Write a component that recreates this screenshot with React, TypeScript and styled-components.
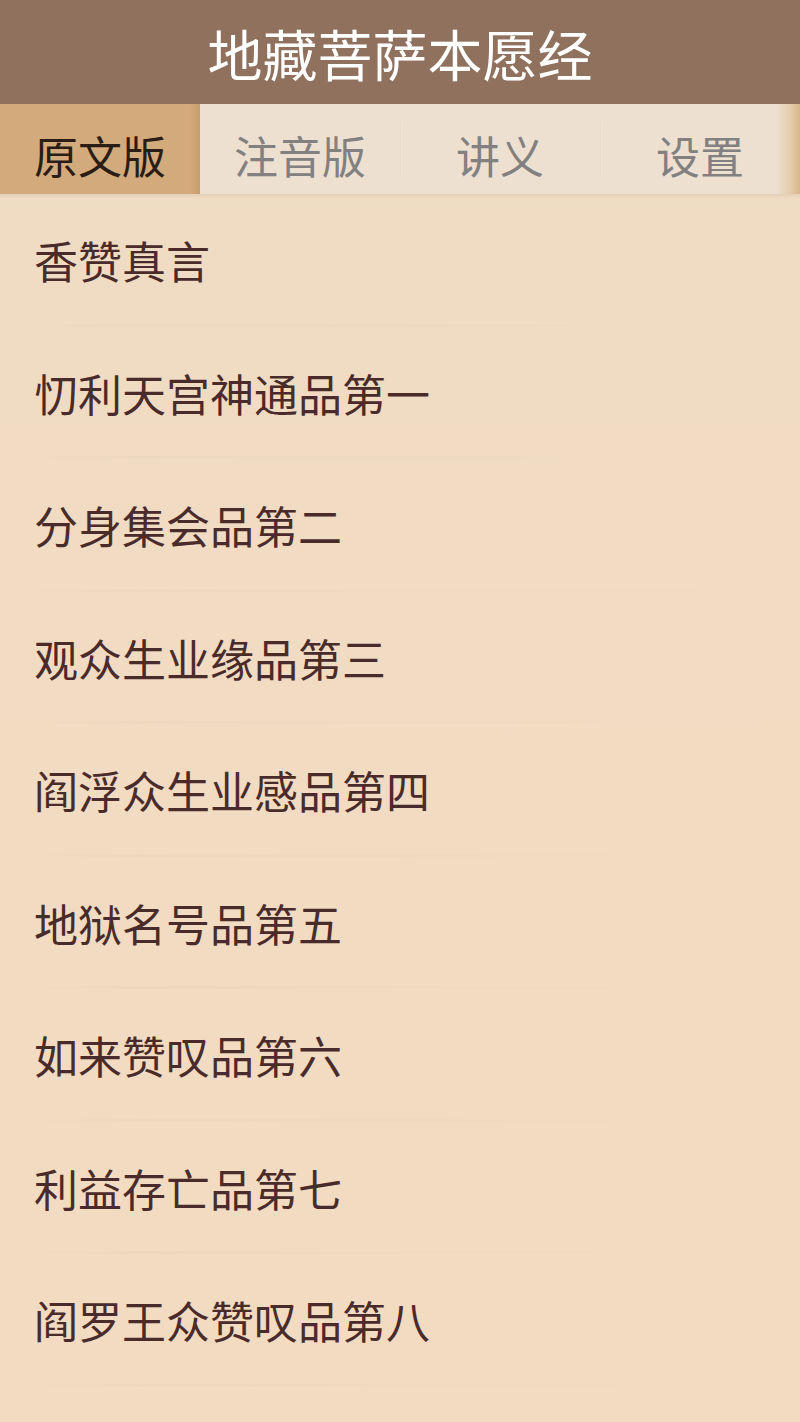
import React from 'react';
import styled, { createGlobalStyle } from 'styled-components';

const GlobalStyle = createGlobalStyle`
  html, body {
    margin: 0;
    padding: 0;
    background: #f1dbc2;
  }
  body {
    font-family: "Noto Sans CJK SC", "Noto Sans", sans-serif;
  }
`;

const Page = styled.div`
  width: 800px;
  height: 1422px;
  overflow: hidden;
  background: linear-gradient(180deg, #eedcc4 0%, #f1dbc2 40%, #f2dbc1 100%);
  display: flex;
  flex-direction: column;
`;

const Header = styled.header`
  height: 104px;
  background: #8f715e;
  display: flex;
  align-items: center;
  justify-content: center;
  color: #ffffff;
  font-size: 55px;
  line-height: 1;
`;

const TabBar = styled.nav`
  height: 90px;
  display: flex;
  background: linear-gradient(90deg, #ede0d0 0%, #ede0d0 97%, #e3c9a6 99%, #d8b68c 100%);
  box-shadow: 0 2px 3px rgba(160, 120, 80, 0.12);
`;

const Tab = styled.div<{ $active?: boolean; $divider?: boolean }>`
  position: relative;
  flex: 1;
  display: flex;
  align-items: center;
  justify-content: center;
  padding-top: 12px;
  font-size: 44px;
  line-height: 1;
  color: ${({ $active }) => ($active ? '#2a1d16' : '#828080')};
  background: ${({ $active }) =>
    $active ? 'linear-gradient(90deg, #d3aa7c 0%, #d3aa7c 95%, #c89c6c 100%)' : 'transparent'};

  &::before {
    content: '';
    display: ${({ $divider }) => ($divider ? 'block' : 'none')};
    position: absolute;
    left: 0;
    top: 20px;
    bottom: 18px;
    width: 2px;
    background: linear-gradient(90deg, #e4d6c5, #f3e9dc);
  }
`;

const List = styled.ul`
  list-style: none;
  margin: 0;
  padding: 0;
  flex: 1;
`;

const Row = styled.li`
  position: relative;
  height: 132.5px;
  display: flex;
  align-items: center;
  padding-left: 34px;
  font-size: 44px;
  line-height: 1;
  color: #4a2b2b;

  &::after {
    content: '';
    position: absolute;
    left: 20px;
    right: 20px;
    bottom: 0;
    height: 3px;
    background: linear-gradient(90deg, rgba(233, 214, 190, 0) 0%, rgba(232, 212, 188, 0.45) 15%, rgba(232, 214, 192, 0.25) 60%, rgba(233, 214, 190, 0) 100%);
  }
`;

const tabs = ['原文版', '注音版', '讲义', '设置'];

const chapters = [
  '香赞真言',
  '忉利天宫神通品第一',
  '分身集会品第二',
  '观众生业缘品第三',
  '阎浮众生业感品第四',
  '地狱名号品第五',
  '如来赞叹品第六',
  '利益存亡品第七',
  '阎罗王众赞叹品第八',
];

const App: React.FC = () => {
  return (
    <>
      <GlobalStyle />
      <Page>
        <Header>地藏菩萨本愿经</Header>
        <TabBar>
          {tabs.map((t, i) => (
            <Tab key={t} $active={i === 0} $divider={i > 1}>
              {t}
            </Tab>
          ))}
        </TabBar>
        <List>
          {chapters.map((c) => (
            <Row key={c}>{c}</Row>
          ))}
        </List>
      </Page>
    </>
  );
};

export default App;
